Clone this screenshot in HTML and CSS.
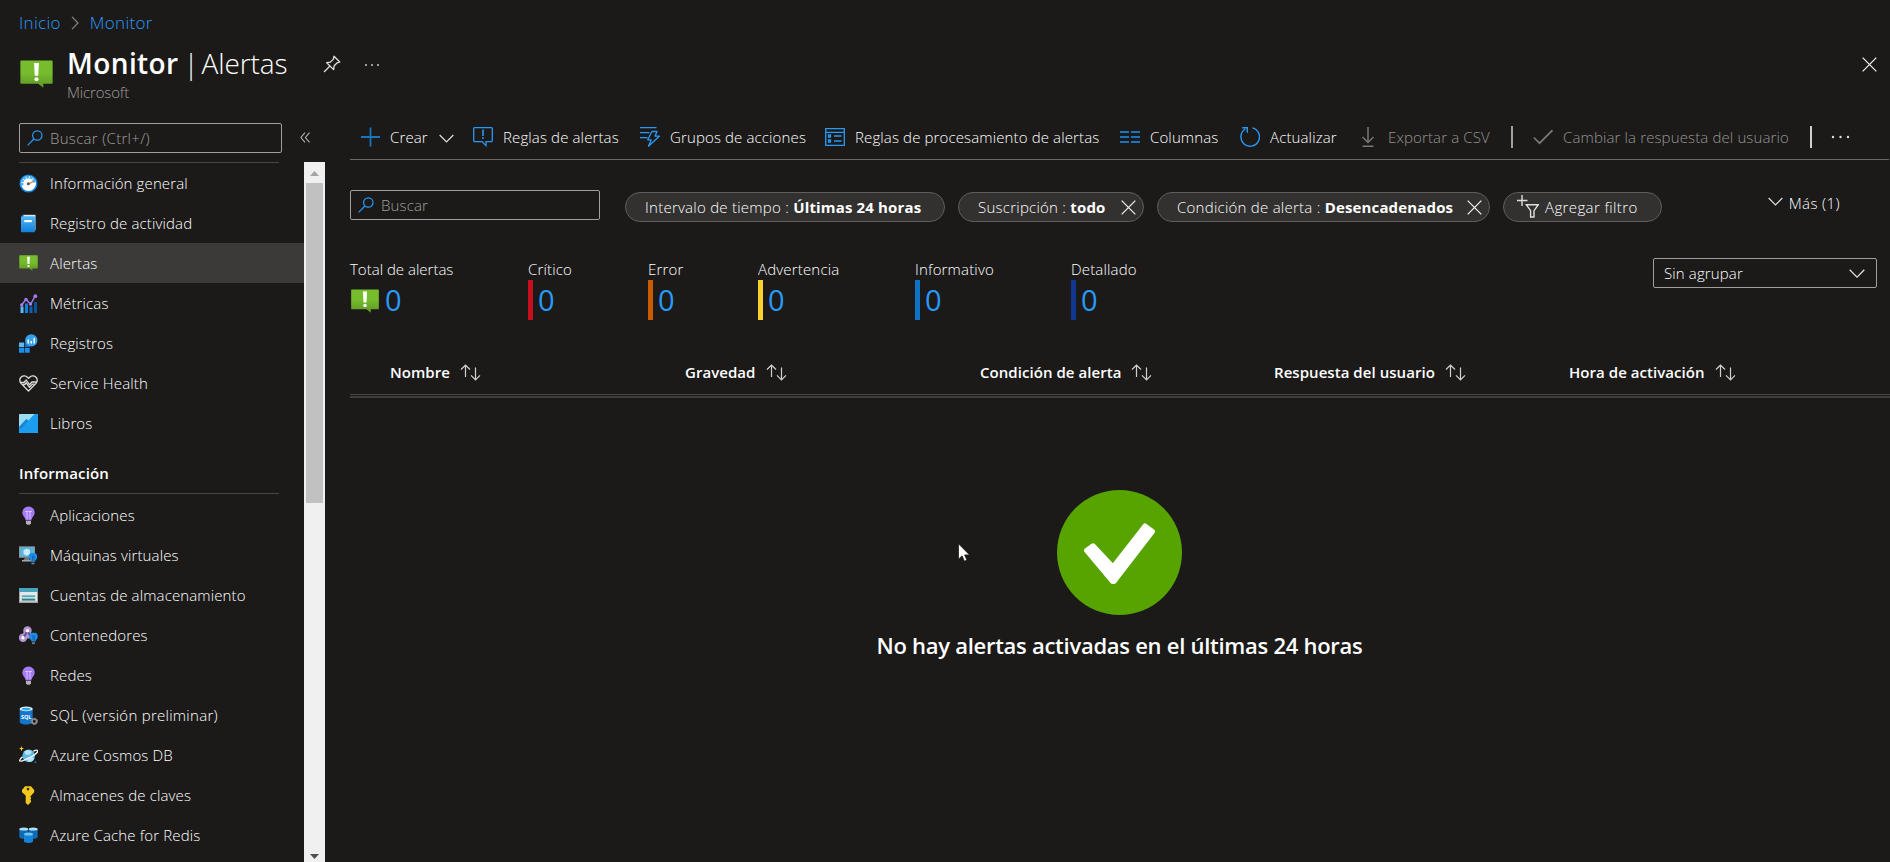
FILE: index.html
```html
<!DOCTYPE html>
<html lang="es">
<head>
<meta charset="utf-8">
<title>Monitor | Alertas</title>
<link rel="stylesheet" href="styles.css">
</head>
<body>
<svg class="defs" width="0" height="0">
  <defs>
    <linearGradient id="green" x1="0" y1="0" x2="0" y2="1"><stop offset="0" stop-color="#76bc2d"/><stop offset=".45" stop-color="#76bc2d"/><stop offset="1" stop-color="#5e9624"/></linearGradient>
    <linearGradient id="blue" x1="0" y1="0" x2="0" y2="1"><stop offset="0" stop-color="#50b8f5"/><stop offset="1" stop-color="#0f80dc"/></linearGradient>
    <symbol id="alert" viewBox="0 0 34 29"><path d="M1 .5h32a.7.7 0 0 1 .7.7v22.6a.7.7 0 0 1-.7.7H24v4.2l-5.200-4.200H1a.7.7 0 0 1-.7-.7V1.200A.7.7 0 0 1 1 .5z" fill="url(#green)"/><path d="M14.500 3h5l-.7 13.200h-3.600z" fill="#fff"/><circle cx="17" cy="20" r="2.100" fill="#fff"/></symbol>
    <symbol id="search" viewBox="0 0 16 16"><g fill="none" stroke="#2899f5" stroke-width="1.200"><circle cx="10.300" cy="5.500" r="4.700"/><path d="M6.900 9 .6 15.300"/></g></symbol>
    <symbol id="chev" viewBox="0 0 16 9"><path d="M.7.8 8 8.100 15.300.8" fill="none" stroke="#e1dfdd" stroke-width="1.300"/></symbol>
    <symbol id="cross" viewBox="0 0 16 16"><path d="M.7.700l14.600 14.600M15.300.700.7 15.300" fill="none" stroke="#f3f2f1" stroke-width="1.300"/></symbol>
    <symbol id="sort" viewBox="0 0 21 17"><g fill="none" stroke="#d2d0ce" stroke-width="1.200"><path d="M5.500 13V1M1 5.500 5.500 1 10 5.500"/><path d="M15.500 3.500V16M11 11.300l4.500 4.500 4.500-4.500"/></g></symbol>
    <symbol id="bulb" viewBox="0 0 19 19"><path d="M9.500.5a6 6 0 0 1 6.200 6c0 3.300-2.900 4.600-3.400 8H6.700c-.5-3.400-3.400-4.700-3.400-8a6 6 0 0 1 6.200-6z" fill="#a67af4"/><path d="M6 5.500h7M8 6v7M11 6v7" stroke="#d8c2ff" stroke-width="1" fill="none"/><path d="M7 15h5v2.500l-1.200 1.200H8.200L7 17.500z" fill="#b3b2b3"/></symbol>
    <symbol id="minibulb" viewBox="0 0 9 12"><path d="M4.500 0a4.300 4.300 0 0 1 4.300 4.200C8.800 6.300 6.700 7 6.400 9H2.600C2.300 7 .2 6.300.2 4.200A4.300 4.300 0 0 1 4.500 0z" fill="#1f8ce6"/><path d="M3 3.500h3M4 4v4M5.500 4v4" stroke="#0a4f9c" stroke-width=".6"/><path d="M3 9.800h3v2H3z" fill="#767676"/></symbol>
  </defs>
</svg>

<nav class="crumbs">
  <a class="crumb">Inicio</a>
  <svg class="crumb-sep" viewBox="0 0 8 14"><path d="M1 .8 7 7l-6 6.200" fill="none" stroke="#8a8886" stroke-width="1.200"/></svg>
  <a class="crumb">Monitor</a>
</nav>

<header class="head">
  <svg class="head-icon"><use href="#alert"/></svg>
  <div class="head-text">
    <h1 class="title"><b class="title-strong">Monitor</b><span class="title-bar">|</span><span class="title-light">Alertas</span></h1>
    <div class="subtitle">Microsoft</div>
  </div>
  <svg class="pin" viewBox="0 0 18 18"><path d="M11 1.200 16.800 7l-2.600.8-3 3-.6 3.800-6.900-6.900 3.700-.6 3-3zM7 11 1 17" fill="none" stroke="#e1dfdd" stroke-width="1.300" stroke-linejoin="round"/></svg>
  <svg class="head-dots" viewBox="0 0 16 4" fill="#c8c6c4"><circle cx="2" cy="2" r="1"/><circle cx="8" cy="2" r="1"/><circle cx="14" cy="2" r="1"/></svg>
  <svg class="close"><use href="#cross"/></svg>
</header>

<div class="body">
  <aside class="side">
    <div class="side-top">
      <div class="box side-search"><svg class="glass"><use href="#search"/></svg><span class="hint hint-side">Buscar (Ctrl+/)</span></div>
      <svg class="collapse" viewBox="0 0 10 11"><path d="M5 .7.900 5.500 5 10.300M9.500.7 5.400 5.500l4.100 4.800" fill="none" stroke="#b3b0ad" stroke-width="1.100"/></svg>
    </div>
    <div class="side-main">
      <div class="menu">
        <div class="rule"></div>
        <a class="item"><svg class="ico" viewBox="0 0 19 19"><circle cx="9.500" cy="9.500" r="8.300" fill="#fff" stroke="#0f7fd8" stroke-width="1.500"/><path d="M3.200 11.500a6.400 6.400 0 0 1 11-6.200" fill="none" stroke="#45b1ee" stroke-width="3" stroke-dasharray="2.600 .8"/><path d="M14.200 5.500a6 6 0 0 1 1.500 3" fill="none" stroke="#45b1ee" stroke-width="2.500"/><path d="M8.800 10.200 14.500 7.500" stroke="#e0662a" stroke-width="1.200"/><circle cx="9.300" cy="9.800" r="1.500" fill="#555"/></svg>Información general</a>
        <a class="item"><svg class="ico" viewBox="0 0 19 19"><path d="M3.500.8h13v15.400h-13z" fill="#d7ecfb"/><path d="M2 2.500 3 1h1.500v15.500L2 18z" fill="#0a62b5"/><path d="M3.500 2.200H15a1 1 0 0 1 1 1v14a1 1 0 0 1-1 1H2.800a1 1 0 0 1-.8-1V3z" fill="url(#blue)"/><path d="M5.300 6h7.500v2.200H5.300z" fill="#fff"/></svg>Registro de actividad</a>
        <a class="item item-on"><svg class="ico ico-alert"><use href="#alert"/></svg>Alertas</a>
        <a class="item"><svg class="ico" viewBox="0 0 19 19"><path d="M1.500 12.500h3V19h-3z" fill="#5ab8f5"/><path d="M6 9.500h3V19H6z" fill="#0f7fd8"/><path d="M10.500 12.500h3V19h-3z" fill="#0b62b8"/><path d="M15 8h3v11h-3z" fill="#0b5298"/><path d="M2.500 11.200 7 5.300l4.600 5L16.200 2" fill="none" stroke="#a67af4" stroke-width="1.500"/><g fill="#a67af4"><circle cx="2.700" cy="11" r="1.700"/><circle cx="7" cy="5.500" r="1.700"/><circle cx="11.500" cy="10" r="1.700"/><circle cx="16.300" cy="2.200" r="1.900"/></g></svg>Métricas</a>
        <a class="item"><svg class="ico" viewBox="0 0 19 19"><path d="M0 8.500h5v4.700H0z" fill="#5ab8f5"/><path d="M0 14h5v4.700H0zM5.700 14h5v4.700h-5z" fill="#1f8ce6"/><path d="M5.700 8.500h5v4.700h-5z" fill="#0f6fc5"/><circle cx="12.300" cy="6.400" r="6.200" fill="#36a0ea"/><path d="M8.500 5.500H10v4H8.500zM11.500 7H13v2.500h-1.500zM14.500 4H16v5.500h-1.500z" fill="#fff"/></svg>Registros</a>
        <a class="item"><svg class="ico" viewBox="0 0 19 19"><g fill="none" stroke="#e1dfdd" stroke-width="1.300" stroke-linejoin="round"><path d="M9.500 17 2 9.400C.3 7.500.4 4.600 2.200 3 4 1.300 6.900 1.500 8.400 3.200L9.500 4.400l1.100-1.200C12.100 1.500 15 1.300 16.800 3c1.800 1.600 1.900 4.500.2 6.400z"/><path d="M1.500 8.500H5L7.200 6l3.300 4.700L12.900 8h4.600M4 10.500h1.800l1.500-1.700 3.200 4.500 3-3.200h2"/></g></svg>Service Health</a>
        <a class="item"><svg class="ico" viewBox="0 0 19 19"><rect width="19" height="19" rx=".7" fill="#9bdcf3"/><path d="M0 13 7.500 5l1.700 1.700L15.500 0H18.300a.7.7 0 0 1 .7.7v17.600a.7.7 0 0 1-.7.7H.7a.7.7 0 0 1-.7-.7z" fill="#1b9cee"/><path d="M0 13 7.500 5l1.700 1.700L2 15z" fill="#1686d5"/></svg>Libros</a>
        <div class="section">Información</div>
        <div class="rule rule-mid"></div>
        <a class="item"><svg class="ico"><use href="#bulb"/></svg>Aplicaciones</a>
        <a class="item"><svg class="ico" viewBox="0 0 19 19"><path d="M0 .3h16v11.500H0z" fill="#8d8f91"/><path d="M1 1.200h14v9.700H1z" fill="#59b4d9"/><path d="M7.700 2.500 11 4.200v3.700L7.700 9.700 4.500 7.900V4.200z" fill="#c9ecf8"/><path d="M6 11.800h4l1 3.200H4z" fill="#77797a"/><path d="M3 14h9v1.500H3z" fill="#a5a7a8"/><use href="#minibulb" x="9.500" y="6.700" width="9" height="12"/></svg>Máquinas virtuales</a>
        <a class="item"><svg class="ico" viewBox="0 0 19 19"><path d="M0 2h19v15H0z" fill="#a0a1a2"/><path d="M0 2h19v4H0z" fill="#48a3bb"/><path d="M1 6h17v9.500H1z" fill="#e6e6e6"/><path d="M2.800 9.300h13.400v1.900H2.800z" fill="#48b0c0"/><path d="M2.800 12.600h13.400v2H2.800z" fill="#2c7f83"/></svg>Cuentas de almacenamiento</a>
        <a class="item"><svg class="ico" viewBox="0 0 19 19"><g fill="#b196cf"><circle cx="8.500" cy="4.500" r="4.200"/><circle cx="4" cy="11.800" r="4.200"/><path d="M5 4.500h7v8H3z"/></g><path d="M8.500 5 4.300 12M8.500 5l3.500 6" stroke="#6a4c92" stroke-width="2"/><circle cx="8.500" cy="4.700" r="1.700" fill="#fff"/><circle cx="4" cy="11.800" r="1.700" fill="#fff"/><use href="#minibulb" x="10" y="6.500" width="9" height="12"/></svg>Contenedores</a>
        <a class="item"><svg class="ico"><use href="#bulb"/></svg>Redes</a>
        <a class="item wide"><svg class="ico" viewBox="0 0 19 19"><path d="M.7 2.800v13C.7 17.300 3.500 18.500 7 18.500s6.700-1.200 6.700-2.700v-13z" fill="#1277cc"/><ellipse cx="7.200" cy="2.900" rx="6.500" ry="2.400" fill="#e2f1fb"/><ellipse cx="7.200" cy="3.100" rx="4.500" ry="1.300" fill="#35a9e6"/><text x="7.200" y="12.500" class="sql">SQL</text><circle cx="15.300" cy="15.300" r="2.300" fill="none" stroke="#8d8f91" stroke-width="1.600"/><circle cx="15.300" cy="15.300" r="3.200" fill="none" stroke="#8d8f91" stroke-width="1" stroke-dasharray="1.300 1.200"/></svg>SQL (versión preliminar)</a>
        <a class="item"><svg class="ico" viewBox="0 0 19 19"><circle cx="9.700" cy="9.800" r="6.300" fill="#5db9e6"/><path d="M5 5.700a6.300 6.300 0 0 1 8 0l-2 2.800-4 .6zM8 12l5-1 2.500 1.500A6.300 6.300 0 0 1 9 16z" fill="#b5e3f7"/><path d="M14.500 5c2.300-.9 3.900-1 4.200-.3.600 1.300-3.300 4.500-8.200 7S1.300 16 .7 14.800c-.3-.8.900-2.300 2.800-3.900" fill="none" stroke="#f2f2f2" stroke-width="1.400"/><path d="M2.500 0 3.200 1.900 5 2.600l-1.800.7-.7 1.900-.7-1.900L0 2.600l1.800-.7z" fill="#f5d62b"/><path d="m16.300 14.500.4 1.200 1.200.4-1.200.5-.4 1.200-.4-1.200-1.200-.5 1.200-.4z" fill="#1f8ce6"/></svg>Azure Cosmos DB</a>
        <a class="item"><svg class="ico" viewBox="0 0 19 19"><path d="M6 .3h6L15.200 4v2.300L12 9.800V10l-.8.800.8.9v1.200l-.8.800.8.900V16l-3 3-2.300-2V9.500L3 6.300V4z" fill="#f2c81e"/><circle cx="9" cy="3.100" r="1.300" fill="#3b2f05"/></svg>Almacenes de claves</a>
        <a class="item"><svg class="ico" viewBox="0 0 19 19"><path d="M.3 3v8c0 1 2 1.800 4.500 1.800s4.400-.8 4.400-1.800V3zM9.800 3v8c0 1 2 1.800 4.500 1.800s4.400-.8 4.400-1.800V3z" fill="#1069b4"/><ellipse cx="4.800" cy="3" rx="4.500" ry="1.600" fill="#aee0f7"/><ellipse cx="14.200" cy="3" rx="4.500" ry="1.600" fill="#aee0f7"/><path d="M5 8v7.300c0 1 2 1.700 4.500 1.700s4.500-.7 4.500-1.700V8z" fill="#1683d8"/><ellipse cx="9.500" cy="8" rx="4.500" ry="1.600" fill="#6cc5f0"/></svg>Azure Cache for Redis</a>
      </div>
      <div class="scroll">
        <svg class="arrow" viewBox="0 0 9 5"><path d="M4.500 0 9 5H0z" fill="#a3a3a3"/></svg>
        <div class="thumb"></div>
        <svg class="arrow arrow-down" viewBox="0 0 9 5"><path d="M0 0h9L4.500 5z" fill="#505050"/></svg>
      </div>
    </div>
  </aside>

  <main class="main">
    <div class="toolbar">
      <a class="cmd"><svg class="cmd-ico" viewBox="0 0 20 20"><path d="M1 10h19M10.500.500v19" stroke="#1a73bd" stroke-width="1.800"/></svg>Crear<svg class="cmd-chev"><use href="#chev"/></svg></a>
      <a class="cmd"><svg class="cmd-ico" viewBox="0 0 20 20"><path d="M1.500.7h17a.8.8 0 0 1 .8.8v12.300a.8.8 0 0 1-.8.800H13v4l-4-4H1.500a.8.8 0 0 1-.8-.800V1.500a.8.8 0 0 1 .8-.8z" fill="none" stroke="#2899f5" stroke-width="1.300"/><path d="M10 2.500V9M10 10.300v1.700" stroke="#2899f5" stroke-width="1.600"/></svg>Reglas de alertas</a>
      <a class="cmd"><svg class="cmd-ico" viewBox="0 0 20 20"><g fill="none" stroke="#2899f5" stroke-width="1.300"><path d="M0 .700h16.500M0 5.700h9.500M0 10.700h7.500"/><path d="M12 4.500h5l-2 4.700h4.300L8.500 19.300l2.700-6.500H7.700z" stroke-linejoin="round"/></g></svg>Grupos de acciones</a>
      <a class="cmd"><svg class="cmd-ico" viewBox="0 0 20 20"><g fill="none" stroke="#2899f5" stroke-width="1.300"><path d="M.7 1.700h18.600v16.600H.7zM.7 5.300h18.600M9 9h7.500M9 14h7.500"/><path d="M3.500 8h2v2h-2zM3.500 13h2v2h-2z"/></g></svg>Reglas de procesamiento de alertas</a>
      <a class="cmd"><svg class="cmd-ico" viewBox="0 0 20 20"><path d="M0 5h9M11 5h9M0 10h9M11 10h9M0 15h9M11 15h9" stroke="#1a73bd" stroke-width="1.800"/></svg>Columnas</a>
      <a class="cmd"><svg class="cmd-ico" viewBox="0 0 20 20"><path d="M12.500.900A9.300 9.300 0 1 1 5.300 2M2.200.700h5.100v5" fill="none" stroke="#2899f5" stroke-width="1.400"/></svg>Actualizar</a>
      <a class="cmd cmd-off"><svg class="cmd-ico" viewBox="0 0 20 20"><path d="M10 0v15.500M4.500 10l5.500 5.500 5.500-5.500M4.500 19.200h11" fill="none" stroke="#797775" stroke-width="1.500"/></svg>Exportar a CSV</a>
      <span class="bar"></span>
      <a class="cmd cmd-off"><svg class="cmd-ico" viewBox="0 0 20 20"><path d="M.8 10.500l5.700 5.700L19.500 3.200" fill="none" stroke="#797775" stroke-width="1.700"/></svg>Cambiar la respuesta del usuario</a>
      <span class="bar bar-bright"></span>
      <svg class="more-dots" viewBox="0 0 19 4" fill="#e1dfdd"><circle cx="2" cy="2" r="1.200"/><circle cx="9.500" cy="2" r="1.200"/><circle cx="17" cy="2" r="1.200"/></svg>
    </div>

    <div class="filters">
      <div class="box main-search"><svg class="glass"><use href="#search"/></svg><span class="hint">Buscar</span></div>
      <div class="pills">
        <span class="pill pill-time">Intervalo de tiempo :&nbsp;<b>Últimas 24 horas</b></span>
        <span class="pill pill-sub">Suscripción :&nbsp;<b>todo</b><svg class="pill-x"><use href="#cross"/></svg></span>
        <span class="pill pill-cond">Condición de alerta :&nbsp;<b>Desencadenados</b><svg class="pill-x"><use href="#cross"/></svg></span>
        <span class="pill pill-add"><svg class="funnel" viewBox="0 0 22 23"><g fill="none" stroke="#e1dfdd" stroke-width="1.400"><path d="M5 0v11M0 5.500h10.500M9.300 9.700h12l-4.300 6v6.300h-3.400v-6.300z"/></g></svg>Agregar filtro</span>
      </div>
      <a class="more"><svg class="more-chev"><use href="#chev"/></svg>Más (1)</a>
    </div>

    <div class="summary">
      <div class="stats">
        <div class="stat"><span class="stat-name tight">Total de alertas</span><span class="stat-val"><svg class="stat-ico"><use href="#alert"/></svg>0</span></div>
        <div class="stat"><span class="stat-name">Crítico</span><span class="stat-val"><i class="sev sev-crit"></i>0</span></div>
        <div class="stat"><span class="stat-name">Error</span><span class="stat-val"><i class="sev sev-err"></i>0</span></div>
        <div class="stat"><span class="stat-name">Advertencia</span><span class="stat-val"><i class="sev sev-warn"></i>0</span></div>
        <div class="stat"><span class="stat-name">Informativo</span><span class="stat-val"><i class="sev sev-info"></i>0</span></div>
        <div class="stat"><span class="stat-name">Detallado</span><span class="stat-val"><i class="sev sev-verb"></i>0</span></div>
      </div>
      <div class="box select">Sin agrupar<svg class="select-chev"><use href="#chev"/></svg></div>
    </div>

    <div class="thead">
      <span class="th">Nombre<svg class="sort"><use href="#sort"/></svg></span>
      <span class="th">Gravedad<svg class="sort"><use href="#sort"/></svg></span>
      <span class="th">Condición de alerta<svg class="sort"><use href="#sort"/></svg></span>
      <span class="th">Respuesta del usuario<svg class="sort"><use href="#sort"/></svg></span>
      <span class="th">Hora de activación<svg class="sort"><use href="#sort"/></svg></span>
    </div>
    <div class="thead-edge"></div>

    <div class="empty">
      <svg class="ok" viewBox="0 0 125 125"><circle cx="62.500" cy="62.500" r="62.500" fill="#57a300"/><path d="M29.500 60.500 36 55.800 56 77 88 36 95.500 41.500 57 91.500 55.500 91.500z" fill="#fff" stroke="#fff" stroke-width="5" stroke-linejoin="round"/></svg>
      <p class="empty-text">No hay alertas activadas en el últimas 24 horas</p>
    </div>
  </main>
</div>
<svg class="pointer" viewBox="0 0 12 19"><path d="M.5.8v15.400l3.600-3.400 2.300 5.400 2.500-1.100-2.300-5.200h4.900z" fill="#fff" stroke="#111" stroke-width=".7"/></svg>
</body>
</html>
```
FILE: styles.css
```css
* { box-sizing: border-box; }
body {
  margin: 0; width: 1890px; height: 862px; overflow: hidden;
  display: flex; flex-direction: column;
  background: #1b1a19; color: #fff;
  font: 350 15px/20px "Open Sans", "Noto Sans", sans-serif;
  letter-spacing: .13px;
  white-space: nowrap;
}
.defs { position: absolute; }
svg { display: block; flex: none; }
b { font-weight: 700; }

.crumbs { display: flex; align-items: center; height: 46px; padding-left: 19px; font-size: 17px; letter-spacing: .3px; }
.crumb { color: #2899f5; }
.crumb-sep { width: 8px; height: 14px; margin: 0 11px 0 10px; }

.head { display: flex; align-items: flex-start; height: 69px; padding: 0 13px 0 20px; }
.head-icon { width: 33px; height: 28px; margin-top: 14px; }
.head-text { width: 222px; margin: -1px 0 0 14px; }
.title { display: flex; margin: 0; font-size: 28px; line-height: 36px; font-weight: 350; }
.title-strong { font-weight: 600; letter-spacing: .4px; }
.title-bar { width: 15px; margin-left: 5px; text-align: center; }
.title-light { margin-left: 3px; letter-spacing: -.1px; }
.subtitle { margin-top: 1px; color: #a19f9d; letter-spacing: -.15px; }
.pin { width: 18px; height: 18px; margin: 9px 0 0 34px; }
.head-dots { width: 16px; height: 4px; margin: 17px 0 0 23px; }
.close { width: 15px; height: 15px; margin: 11px 0 0 auto; }

.body { display: flex; flex: 1; min-height: 0; }
.side { display: flex; flex-direction: column; width: 325px; }
.side-top { display: flex; height: 47px; padding: 8px 0 0 19px; }
.box { display: flex; align-items: center; border: 1px solid #a19f9d; border-radius: 2px; }
.side-search { width: 263px; height: 30px; padding-left: 7px; }
.glass { width: 16px; height: 16px; }
.hint { margin-left: 7px; color: #a19f9d; }
.hint-side { margin-top: -1px; letter-spacing: .3px; }
.collapse { width: 10px; height: 11px; margin: 9px 0 0 18px; }
.side-main { display: flex; flex: 1; min-height: 0; }
.menu { width: 304px; overflow: hidden; }
.rule { height: 1px; margin: 0 25px 0 19px; background: #484644; }
.rule-mid { margin-bottom: 1px; }
.item { display: flex; align-items: center; gap: 12px; height: 40px; padding-left: 19px; }
.item-on { background: #3b3a39; }
.wide { letter-spacing: .27px; }
.ico { width: 19px; height: 19px; }
.ico-alert { height: 16px; }
.sql { font: 700 5.500px "Open Sans", sans-serif; fill: #fff; text-anchor: middle; letter-spacing: 0; }
.section { height: 50px; padding: 20px 0 0 19px; font-weight: 600; }
.scroll { display: flex; flex-direction: column; align-items: center; width: 21px; background: #f0f0f0; }
.arrow { width: 9px; height: 5px; margin-top: 9px; }
.thumb { width: 17px; height: 320px; margin-top: 7px; background: #c1c1c1; }
.arrow-down { margin: auto 0 3px; }

.main { display: flex; flex-direction: column; flex: 1; padding-left: 25px; min-width: 0; }
.toolbar {
  display: grid; grid-template-columns: 113px 167px 185px 295px 120px 118px 153px 22px 277px 21px auto;
  align-items: center; height: 45px; padding-left: 10px; margin-right: 1px; border-bottom: 1px solid #6b6967;
}
.cmd { display: flex; align-items: center; }
.cmd-ico { width: 20px; height: 20px; margin-right: 10px; }
.cmd-chev { width: 15px; height: 9px; margin: 3px 0 0 11px; }
.cmd-off { color: #979593; }
.bar { width: 2px; height: 22px; background: #a19f9d; }
.bar-bright { background: #d2d0ce; }
.more-dots { width: 19px; height: 4px; }

.filters { display: flex; padding: 30px 50px 0 0; }
.main-search { width: 250px; height: 30px; padding-left: 7px; }
.pills { display: flex; gap: 13px; margin: 2px 0 0 25px; }
.pill { display: flex; align-items: center; height: 30px; padding: 0 0 1px 19px; border: 1px solid #605e5c; border-radius: 15px; background: #323130; letter-spacing: .25px; }
.pill b { letter-spacing: .15px; }
.pill-time { width: 320px; }
.pill-sub { width: 186px; }
.pill-cond { width: 333px; }
.pill-add { width: 159px; padding-left: 13px; letter-spacing: .38px; }
.pill-x { width: 15px; height: 15px; margin: 1px 7px 0 auto; }
.funnel { width: 22px; height: 23px; margin-right: 6px; }
.more { display: flex; align-items: center; height: 26px; margin-left: auto; letter-spacing: .4px; }
.more-chev { width: 15px; height: 9px; margin: -3px 6px 0 0; }

.summary { display: flex; justify-content: space-between; padding: 37px 13px 0 0; }
.stats { display: grid; grid-template-columns: 178px 120px 110px 157px 156px 110px; }
.stat { display: flex; flex-direction: column; }
.stat-name { line-height: 21px; letter-spacing: .17px; }
.stat-name.tight { letter-spacing: 0; }
.stat-val { display: flex; align-items: center; height: 40px; color: #2899f5; font-size: 29px; line-height: 38px; font-weight: 400; }
.stat-ico { width: 30px; height: 24px; margin: 2px 5px 0 0; }
.sev { width: 5px; height: 40px; margin-right: 5px; }
.sev-crit { background: #c50f1f; }
.sev-err { background: #ca5b00; }
.sev-warn { background: #f8d22a; }
.sev-info { background: #0f73c5; }
.sev-verb { background: #113790; }
.select { justify-content: space-between; width: 224px; height: 30px; margin-top: -1px; padding: 0 11px 0 10px; }
.select-chev { width: 16px; height: 9px; }

.thead {
  display: grid; grid-template-columns: 295px 295px 294px 295px auto; align-items: center;
  height: 45px; margin-top: 30px; padding: 0 0 1px 40px; border-bottom: 1px solid #484644;
  font-weight: 600; letter-spacing: .05px;
}
.thead-edge { height: 2px; margin-top: 1px; background: #3f3d3c; }
.th { display: flex; align-items: center; }
.sort { width: 21px; height: 17px; margin: 2px 0 0 10px; }

.empty { display: flex; flex-direction: column; align-items: center; margin-top: 92px; padding-right: 1px; }
.ok { width: 125px; height: 125px; }
.empty-text { margin: 15px 0 0; font-size: 22px; line-height: 30px; font-weight: 600; letter-spacing: -.27px; }

.pointer { position: absolute; left: 958px; top: 543px; width: 12px; height: 19px; }
```
